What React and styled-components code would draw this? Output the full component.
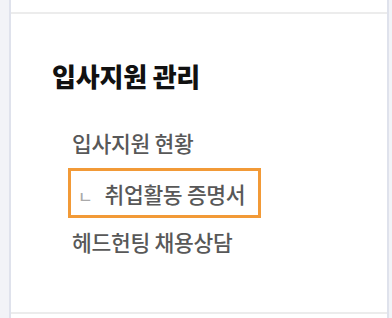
import React from "react";
import styled, { createGlobalStyle } from "styled-components";

const Global = createGlobalStyle`
  html, body { margin: 0; padding: 0; background: #f2f3f7; }
  body { font-family: "Noto Sans CJK KR", "Noto Sans", sans-serif; }
`;

const Page = styled.div`
  padding-left: 9px;
  height: 318px;
  overflow: hidden;
`;

const Panel = styled.div`
  width: 380px;
  box-sizing: border-box;
  height: 318px;
  background: #ffffff;
  border-left: 2px solid #dfe2ec;
  border-right: 2px solid #dfe2ec;
`;

const PrevSection = styled.div`
  height: 12px;
  border-bottom: 2px solid #ececec;
`;

const Section = styled.section`
  padding: 46px 0 48px 41px;
  border-bottom: 2px solid #ececec;
`;

const Title = styled.h2`
  margin: 0;
  font-size: 26px;
  line-height: 32px;
  font-weight: 900;
  color: #111;
  letter-spacing: -0.2px;
`;

const Menu = styled.ul`
  list-style: none;
  margin: 27px 0 0 16px;
  padding: 0;
  display: flex;
  flex-direction: column;
`;

const Item = styled.li`
  box-sizing: border-box;
  display: flex;
  align-items: center;
  gap: 12px;
  height: ${(p) => (p.$active ? "50px" : "46px")};
  width: 193px;
  margin-top: ${(p) => (p.$active ? "3px" : "0")};
  padding-left: ${(p) => (p.$active ? "7px" : "4px")};
  border: ${(p) => (p.$active ? "3px solid #f29a37" : "none")};
  font-size: 21.5px;
  font-weight: 500;
  color: #585858;
  letter-spacing: -0.3px;
`;

const Sub = styled.span`
  font-size: 16px;
  color: #aaa;
  margin-top: 5px;
`;

export default function App() {
  return (
    <Page>
      <Global />
      <Panel>
        <PrevSection />
        <Section>
          <Title>입사지원 관리</Title>
          <Menu>
            <Item>입사지원 현황</Item>
            <Item $active>
              <Sub>ㄴ</Sub>
              취업활동 증명서
            </Item>
            <Item>헤드헌팅 채용상담</Item>
          </Menu>
        </Section>
      </Panel>
    </Page>
  );
}
